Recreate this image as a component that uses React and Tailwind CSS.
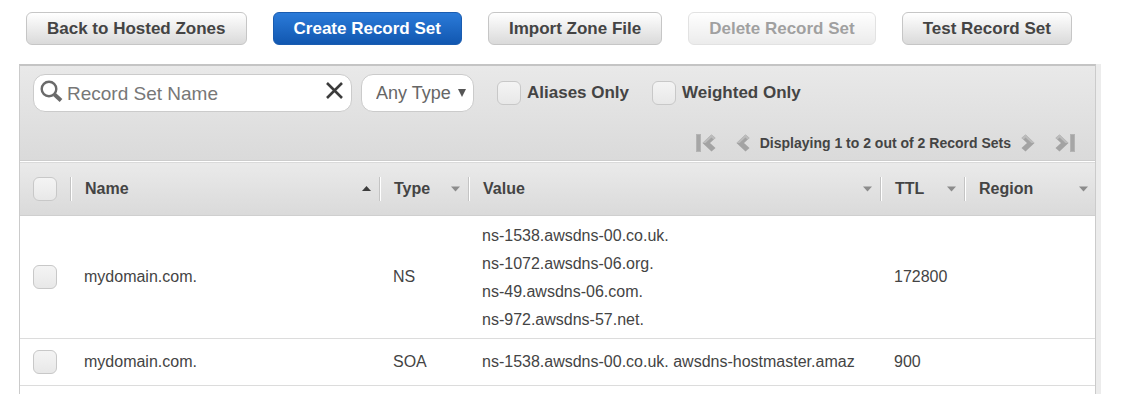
import { useState } from "react";

const records = [
  {
    name: "mydomain.com.",
    type: "NS",
    values: [
      "ns-1538.awsdns-00.co.uk.",
      "ns-1072.awsdns-06.org.",
      "ns-49.awsdns-06.com.",
      "ns-972.awsdns-57.net.",
    ],
    ttl: "172800",
    region: "",
  },
  {
    name: "mydomain.com.",
    type: "SOA",
    values: ["ns-1538.awsdns-00.co.uk. awsdns-hostmaster.amaz"],
    ttl: "900",
    region: "",
  },
];

function ActionButton({ children, primary, disabled }) {
  const look = primary
    ? "border-[#1a5cb0] bg-linear-to-b from-[#2b7bd9] to-[#1157b0] text-white"
    : "border-[#c6c6c6] bg-linear-to-b from-white to-[#dadada] text-[#444]";
  return (
    <button
      type="button"
      disabled={disabled}
      className={`h-[33px] rounded-md border px-5 text-[17px] leading-5 font-bold whitespace-nowrap disabled:opacity-50 ${look}`}
    >
      {children}
    </button>
  );
}

function Check({ id, label }) {
  return (
    <input
      id={id}
      type="checkbox"
      aria-label={label}
      className="block size-6 shrink-0 appearance-none rounded-md border border-[#c8c8c8] bg-linear-to-b from-[#f4f4f4] to-[#e8e8e8] checked:from-[#2b7bd9] checked:to-[#1157b0]"
    />
  );
}

function Chevron({ right, bar, label }) {
  const width = bar ? 20 : 14;
  return (
    <button type="button" aria-label={label} className="block shrink-0">
      <svg
        width={width}
        height="18"
        viewBox={`0 0 ${width} 18`}
        fill="none"
        className={right ? "-scale-x-100" : ""}
      >
        {bar && <rect x="0.5" y="0.5" width="4" height="17" fill="#a6a6a6" stroke="#b4b4b4" />}
        <g transform={bar ? "translate(6 0)" : undefined}>
          <path d="M0.5 9L9.5 0.5L13.5 4L8 9L13.5 14L9.5 17.5Z" fill="#a3a3a3" />
          <path d="M0.5 9L9.5 0.5L13.5 4L11.5 5.5L9.5 3.5L3.5 9Z" fill="#bcbcbc" />
        </g>
      </svg>
    </button>
  );
}

function Header({ children, sorted, last }) {
  return (
    <th scope="col" className="p-0 text-left" aria-sort={sorted ? "ascending" : undefined}>
      <div className="flex h-6 items-center">
        <button
          type="button"
          className={`flex flex-1 items-center justify-between pl-[13px] text-left font-bold ${last ? "pr-[7px]" : "pr-2"}`}
        >
          {children}
          <svg width="9" height="6" viewBox="0 0 9 6">
            {sorted ? (
              <path d="M0 5L4.500 0L9 5Z" fill="#3c3c3c" />
            ) : (
              <path d="M0 0.500H9L4.500 5.500Z" fill="#8c8c8c" />
            )}
          </svg>
        </button>
        {!last && <span className="h-6 w-[2px] border-r border-l border-r-white border-l-[#c4c4c4]" />}
      </div>
    </th>
  );
}

export default function App() {
  const [query, setQuery] = useState("");
  return (
    <main className="bg-white font-['Liberation_Sans',Arial,sans-serif] text-[#444]">
      <div className="flex gap-[26px] pt-3 pl-[26px]">
        <ActionButton>Back to Hosted Zones</ActionButton>
        <ActionButton primary>Create Record Set</ActionButton>
        <ActionButton>Import Zone File</ActionButton>
        <ActionButton disabled>Delete Record Set</ActionButton>
        <ActionButton>Test Record Set</ActionButton>
      </div>

      <div className="mt-[19px] mr-[29px] ml-[19px] border-r-[5px] border-[#ececec]">
        <section className="border-x border-t-2 border-x-[#cbcbcb] border-t-[#c4c4c4] pb-2">
          <div className="border-b border-[#cdcdcd] bg-linear-to-b from-[#e9e9e9] to-[#dadada] pt-2 pr-5 pb-2 pl-[13px]">
            <div className="flex items-center">
              <div className="flex h-[38px] w-[319px] items-center rounded-xl border border-[#cbcbcb] bg-white pr-2 pl-[6px]">
                <svg width="23" height="23" viewBox="0 0 23 23" fill="none" stroke="#6a6a6a" className="mb-1 shrink-0">
                  <circle cx="9" cy="9" r="7.300" strokeWidth="2.400" />
                  <path d="M14.500 14.500L21 20.500" strokeWidth="4" />
                </svg>
                <input
                  type="text"
                  aria-label="Record Set Name"
                  placeholder="Record Set Name"
                  value={query}
                  onChange={(e) => setQuery(e.target.value)}
                  className="ml-1 min-w-0 flex-1 pt-[2px] text-[19px] leading-6 outline-none placeholder:text-[#777]"
                />
                <button type="button" aria-label="Clear" onClick={() => setQuery("")} className="mb-[6px] shrink-0">
                  <svg width="17" height="17" viewBox="0 0 17 17" fill="none" stroke="#3c3c3c" strokeWidth="2.600">
                    <path d="M1 1L16 16M16 1L1 16" />
                  </svg>
                </button>
              </div>
              <div className="relative ml-[9px]">
                <select
                  aria-label="Record type"
                  className="block h-[38px] w-[113px] appearance-none rounded-xl border border-[#cbcbcb] bg-white pl-[14px] text-[18px] text-[#666]"
                >
                  <option>Any Type</option>
                  <option>A</option>
                  <option>NS</option>
                  <option>SOA</option>
                </select>
                <svg
                  width="8"
                  height="8"
                  viewBox="0 0 8 8"
                  className="pointer-events-none absolute top-[15px] right-2"
                >
                  <path d="M0 0H8L4 8Z" fill="#555" />
                </svg>
              </div>
              <div className="ml-[23px] flex items-center gap-[6px]">
                <Check id="aliases" />
                <label htmlFor="aliases" className="text-[17px] leading-6 font-bold">
                  Aliases Only
                </label>
              </div>
              <div className="ml-[23px] flex items-center gap-[6px]">
                <Check id="weighted" />
                <label htmlFor="weighted" className="text-[17px] leading-6 font-bold">
                  Weighted Only
                </label>
              </div>
            </div>
            <nav aria-label="Pages" className="mt-[22px] flex items-center justify-end">
              <Chevron bar label="First page" />
              <span className="w-5" />
              <Chevron label="Previous page" />
              <span className="mr-[10px] ml-[10px] text-[14px] leading-[18px] font-bold">
                Displaying 1 to 2 out of 2 Record Sets
              </span>
              <Chevron right label="Next page" />
              <span className="w-5" />
              <Chevron right bar label="Last page" />
            </nav>
          </div>

          <table className="w-full table-fixed border-collapse text-[16px] leading-7">
            <colgroup>
              <col className="w-[52px]" />
              <col className="w-[309px]" />
              <col className="w-[89px]" />
              <col />
              <col className="w-[84px]" />
              <col className="w-[129px]" />
            </colgroup>
            <thead>
              <tr className="h-[54px] border-t border-b border-t-white border-b-[#cfcfcf] bg-linear-to-b from-[#eaeaea] to-[#dadada]">
                <th className="p-0">
                  <div className="flex h-6 items-center justify-between pl-[13px]">
                    <Check label="Select all" />
                    <span className="h-6 w-[2px] border-r border-l border-r-white border-l-[#c4c4c4]" />
                  </div>
                </th>
                <Header sorted>Name</Header>
                <Header>Type</Header>
                <Header>Value</Header>
                <Header>TTL</Header>
                <Header last>Region</Header>
              </tr>
            </thead>
            <tbody>
              {records.map((r) => (
                <tr key={r.type} className="border-b border-[#dcdcdc]">
                  <td className="pl-[13px]">
                    <Check label={`Select ${r.name} ${r.type}`} />
                  </td>
                  <td className="pl-3">{r.name}</td>
                  <td className="pl-3">{r.type}</td>
                  <td className={`pl-3 whitespace-nowrap ${r.values.length > 1 ? "pt-[6px] pb-1" : "py-[9px]"}`}>
                    {r.values.map((v) => (
                      <div key={v}>{v}</div>
                    ))}
                  </td>
                  <td className="pl-3">{r.ttl}</td>
                  <td className="pl-3">{r.region}</td>
                </tr>
              ))}
            </tbody>
          </table>
        </section>
      </div>
    </main>
  );
}
